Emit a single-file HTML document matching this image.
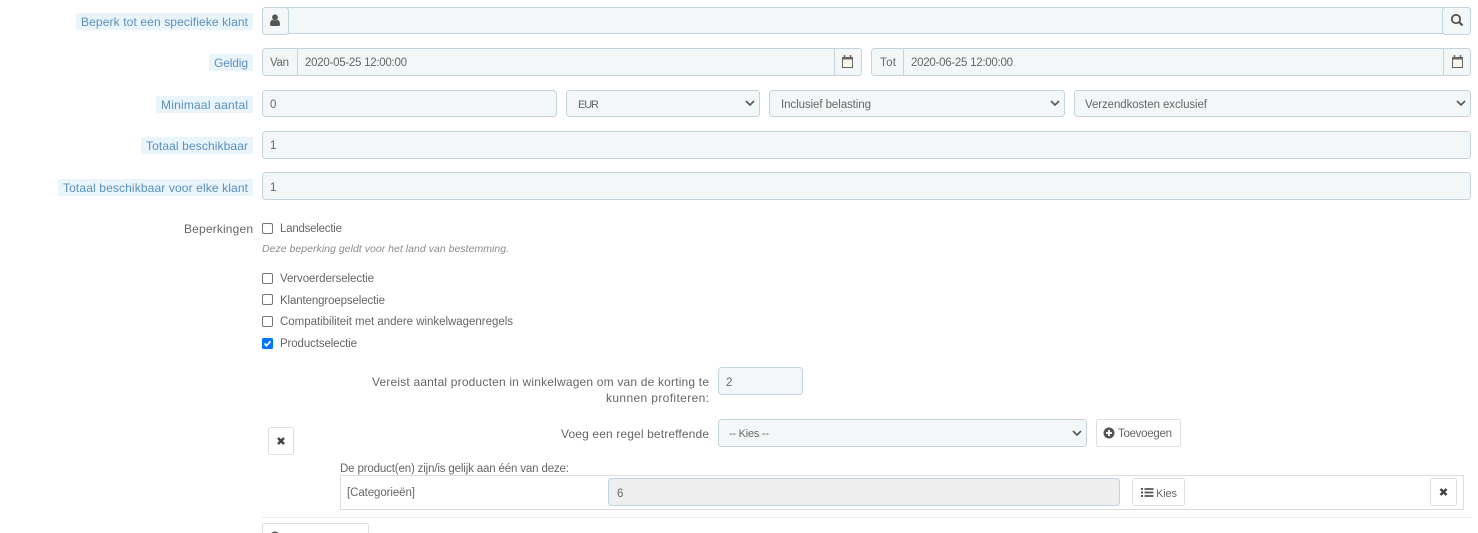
<!DOCTYPE html>
<html lang="nl">
<head>
<meta charset="utf-8">
<title>Winkelwagenregel</title>
<style>
html,body{margin:0;padding:0;background:#fff;width:1478px;height:533px;overflow:hidden}
svg{display:block}
text{font-family:"Liberation Sans",sans-serif;font-size:11.5px;fill:#666}
.l{fill:#5a90bd;font-size:12px}
.f{fill:#f4f7f8;stroke:#c5d4dc}
.a{fill:#f4f7f8;stroke:#c5d4dc}
.b{fill:#fff;stroke:#dde0e2}
.lb{fill:#eaf4fb}
.cb{fill:#fff;stroke:#767676}
.ch{fill:none;stroke:#555;stroke-width:1.6}
.i{fill:#555}
.s{font-size:11px}
</style>
</head>
<body>
<svg width="1478" height="533" viewBox="0 0 1478 533" xmlns="http://www.w3.org/2000/svg">
<!-- labels -->
<rect class="lb" x="76" y="13" width="177" height="17" rx="2"/>
<rect class="lb" x="209" y="54" width="44" height="17" rx="2"/>
<rect class="lb" x="156" y="96" width="97" height="17" rx="2"/>
<rect class="lb" x="141" y="137" width="112" height="17" rx="2"/>
<rect class="lb" x="58" y="179" width="195" height="17" rx="2"/>
<text class="l" x="81" y="26" textLength="167">Beperk tot een specifieke klant</text>
<text class="l" x="214" y="67" textLength="34">Geldig</text>
<text class="l" x="161" y="109" textLength="87">Minimaal aantal</text>
<text class="l" x="146" y="150" textLength="102">Totaal beschikbaar</text>
<text class="l" x="63" y="192" textLength="185">Totaal beschikbaar voor elke klant</text>

<!-- row 1 -->
<rect class="f" x="262.500" y="7.500" width="1208" height="26" rx="3"/>
<rect class="a" x="262.500" y="7.500" width="26" height="27" rx="3"/>
<rect class="a" x="1442.500" y="7.500" width="28" height="27" rx="3"/>
<path class="i" d="M271.500 26c-1 0-1.500-.5-1.500-1.500 0-2.500.8-4.500 2.700-4.800 1 .8 3.600.8 4.600 0 1.900.3 2.700 2.300 2.700 4.800 0 1-.5 1.500-1.500 1.500z"/>
<circle class="i" cx="275" cy="17.300" r="2.900"/>
<circle cx="1456" cy="19" r="4.200" fill="none" stroke="#555" stroke-width="1.800"/>
<path d="M1459.200 22.200l3.300 3.300" stroke="#555" stroke-width="2.200" fill="none"/>

<!-- row 2 -->
<rect class="f" x="262.500" y="48.500" width="599" height="27" rx="3"/>
<path d="M297.500 48.500v27M834.500 48.500v27" stroke="#c5d4dc"/>
<text x="270" y="66" textLength="19">Van</text>
<text x="305" y="66" textLength="102">2020-05-25 12:00:00</text>
<rect x="842.500" y="57.500" width="10" height="10" fill="#fbf6ea" stroke="#666"/>
<rect x="842" y="57" width="11" height="2.500" fill="#666"/>
<path d="M844.500 55v3M850.500 55v3" stroke="#666" stroke-width="1.500"/>

<rect class="f" x="871.500" y="48.500" width="599" height="27" rx="3"/>
<path d="M903.500 48.500v27M1443.500 48.500v27" stroke="#c5d4dc"/>
<text x="880" y="66" textLength="16">Tot</text>
<text x="911" y="66" textLength="102">2020-06-25 12:00:00</text>
<rect x="1452.500" y="57.500" width="10" height="10" fill="#fbf6ea" stroke="#666"/>
<rect x="1452" y="57" width="11" height="2.500" fill="#666"/>
<path d="M1454.500 55v3M1460.500 55v3" stroke="#666" stroke-width="1.500"/>

<!-- row 3 -->
<rect class="f" x="262.500" y="90.500" width="294" height="26" rx="3"/>
<text x="270" y="108" textLength="6">0</text>
<rect class="f" x="566.500" y="90.500" width="193" height="26" rx="3"/>
<text class="s" x="578" y="108" textLength="21">EUR</text>
<path class="ch" d="M746 101l4 4 4-4"/>
<rect class="f" x="769.500" y="90.500" width="295" height="26" rx="3"/>
<text x="781" y="108" textLength="90">Inclusief belasting</text>
<path class="ch" d="M1051 101l4 4 4-4"/>
<rect class="f" x="1074.500" y="90.500" width="396" height="26" rx="3"/>
<text x="1085" y="108" textLength="122">Verzendkosten exclusief</text>
<path class="ch" d="M1457 101l4 4 4-4"/>

<!-- rows 4, 5 -->
<rect class="f" x="262.500" y="131.500" width="1208" height="27" rx="3"/>
<text x="270" y="149" textLength="5">1</text>
<rect class="f" x="262.500" y="172.500" width="1208" height="27" rx="3"/>
<text x="270" y="191" textLength="5">1</text>

<!-- restrictions -->
<text x="184" y="233" textLength="69" style="font-size:12px">Beperkingen</text>
<rect class="cb" x="262.500" y="223.500" width="10" height="10" rx="1.500"/>
<text x="280" y="232" textLength="62">Landselectie</text>
<text x="262" y="252" textLength="247" style="font-style:italic;font-size:10.500px;fill:#8c8c8c">Deze beperking geldt voor het land van bestemming.</text>
<rect class="cb" x="262.500" y="273.500" width="10" height="10" rx="1.500"/>
<text x="280" y="282" textLength="94">Vervoerderselectie</text>
<rect class="cb" x="262.500" y="294.500" width="10" height="10" rx="1.500"/>
<text x="280" y="304" textLength="105">Klantengroepselectie</text>
<rect class="cb" x="262.500" y="316.500" width="10" height="10" rx="1.500"/>
<text x="280" y="325" textLength="233">Compatibiliteit met andere winkelwagenregels</text>
<rect x="262" y="338" width="11" height="11" rx="1.500" fill="#0075ff"/>
<path d="M264.500 343.500l2 2.200 4-4.400" fill="none" stroke="#fff" stroke-width="1.800"/>
<text x="280" y="347" textLength="77">Productselectie</text>

<!-- product rule -->
<text x="372" y="386" textLength="337" style="font-size:12px">Vereist aantal producten in winkelwagen om van de korting te</text>
<text x="606" y="402" textLength="103" style="font-size:12px">kunnen profiteren:</text>
<rect class="f" x="718.500" y="367.500" width="84" height="27" rx="3"/>
<text x="726" y="386" textLength="6">2</text>

<rect class="b" x="268.500" y="427.500" width="25" height="27" rx="2"/>
<path d="M278 438l6 6M284 438l-6 6" stroke="#444" stroke-width="2.600" fill="none"/>
<text x="561" y="438" textLength="148" style="font-size:12px">Voeg een regel betreffende</text>
<rect class="f" x="718.500" y="419.500" width="368" height="27" rx="3"/>
<text class="s" x="729" y="437" textLength="40">-- Kies --</text>
<path class="ch" d="M1073 431l4 4 4-4"/>
<rect class="b" x="1096.500" y="419.500" width="84" height="27" rx="2"/>
<circle cx="1109" cy="433" r="5.500" fill="#555"/>
<path d="M1109 430v6M1106 433h6" stroke="#fff" stroke-width="1.800"/>
<text x="1118" y="437" textLength="54">Toevoegen</text>

<text x="340" y="472" textLength="229">De product(en) zijn/is gelijk aan één van deze:</text>
<rect x="340.500" y="475.500" width="1123" height="34" fill="#fff" stroke="#dcdfe1"/>
<path d="M341 509.500h1123" stroke="#d8dbdd"/>
<text x="347" y="496" textLength="68">[Categorieën]</text>
<rect x="608.500" y="478.500" width="511" height="27" rx="3" fill="#eee" stroke="#c5d4dc"/>
<text x="617" y="497" textLength="6">6</text>
<rect class="b" x="1132.500" y="478.500" width="52" height="27" rx="2"/>
<path d="M1141 489h2M1141 492.500h2M1141 496h2" stroke="#555" stroke-width="2" fill="none"/>
<path d="M1144.500 489h9M1144.500 492.500h9M1144.500 496h9" stroke="#555" stroke-width="1.800" fill="none"/>
<text class="s" x="1156" y="497" textLength="21">Kies</text>
<rect class="b" x="1430.500" y="478.500" width="26" height="27" rx="2"/>
<path d="M1440.500 489l6 6M1446.500 489l-6 6" stroke="#444" stroke-width="2.600" fill="none"/>

<path d="M262 517.500h1209" stroke="#eceeef"/>
<rect class="b" x="262.500" y="523.500" width="106" height="20" rx="2"/>
<circle cx="275" cy="537" r="5.500" fill="#555"/>
</svg>
</body>
</html>
